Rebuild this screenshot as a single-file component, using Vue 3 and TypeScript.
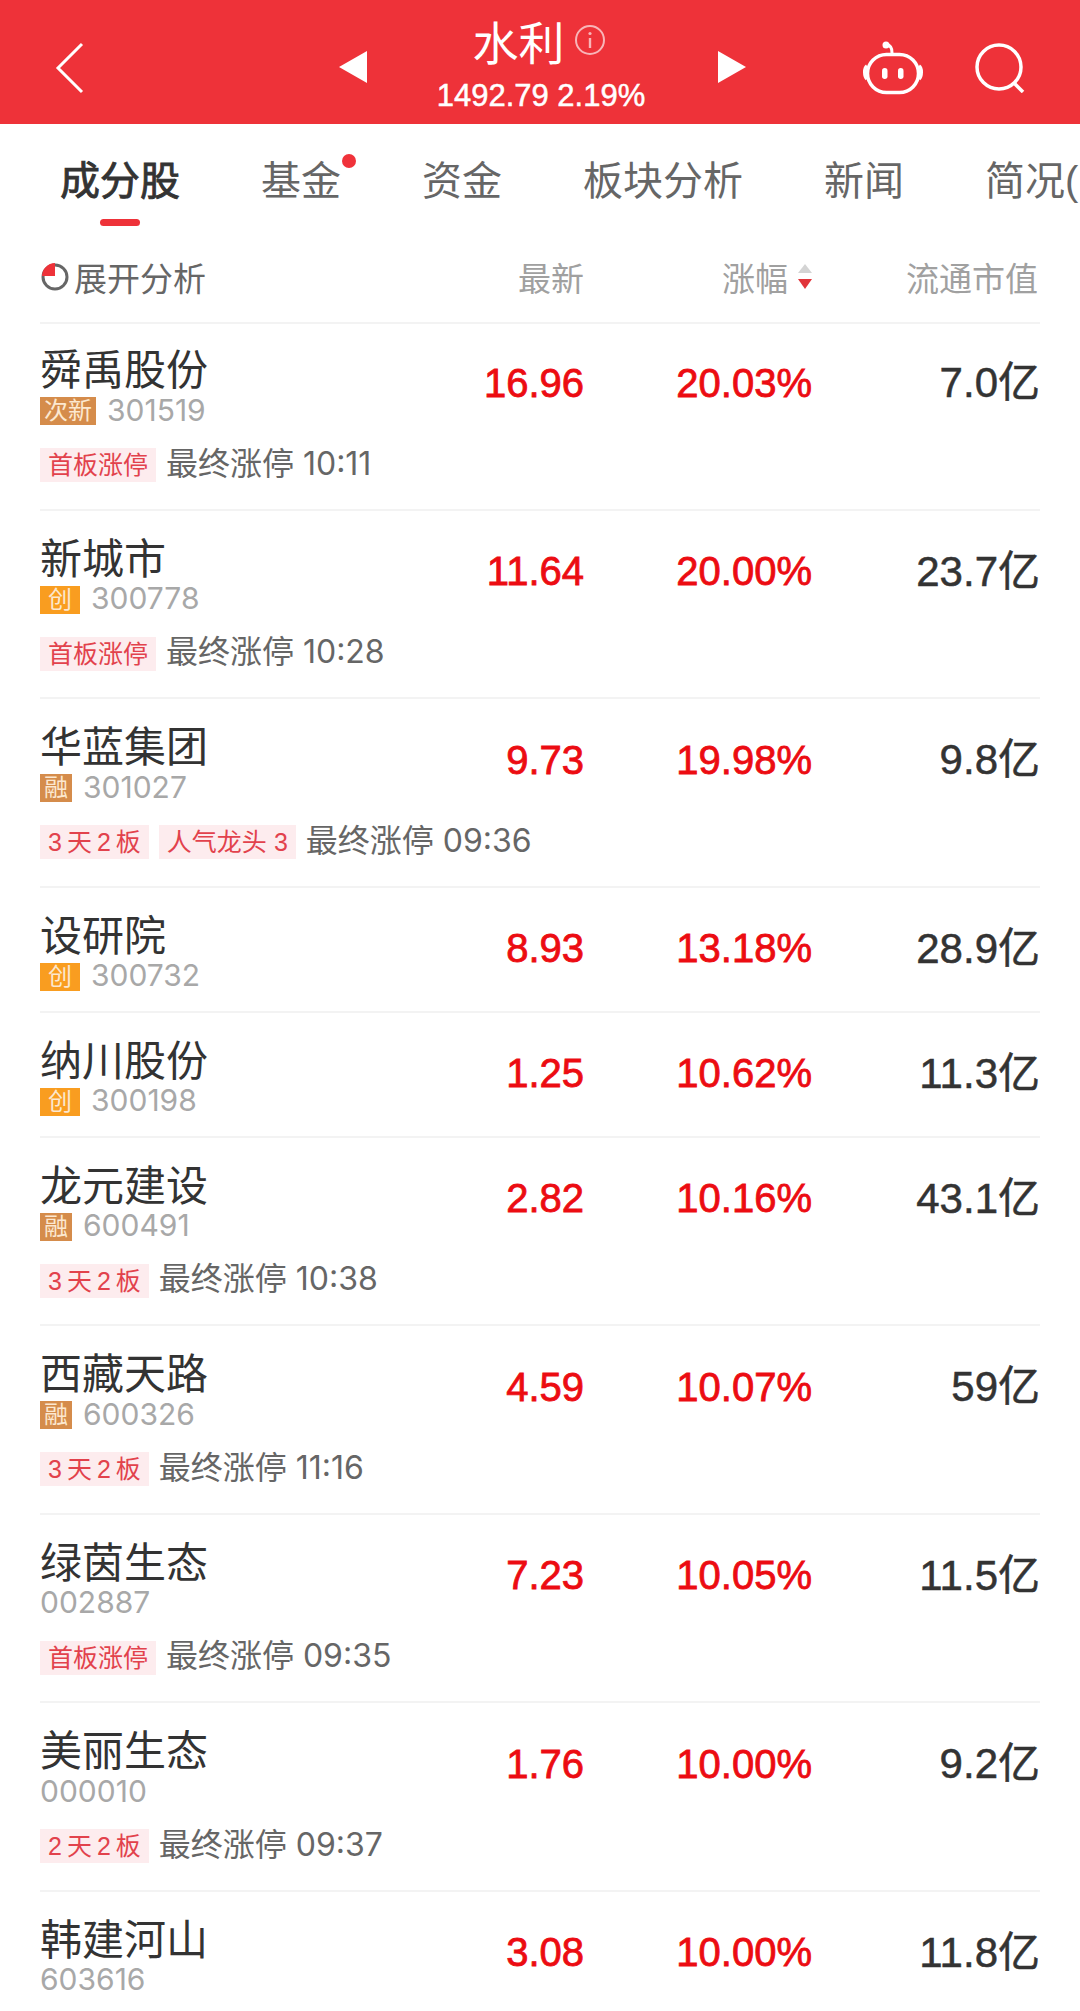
<template>
  <div class="page">
    <header class="topbar">
      <div class="left">
        <svg class="back" width="30" height="52" viewBox="0 0 30 52"><path d="M28 2 4 26l24 24" fill="none" stroke="#fff" stroke-width="3"/></svg>
      </div>
      <svg class="arrow" width="28" height="32" viewBox="0 0 28 32"><path d="M28 0v32L0 16z" fill="#fff"/></svg>
      <div class="center">
        <div class="title">
          <span>水利</span>
          <svg width="32" height="32" viewBox="0 0 32 32">
            <circle cx="16" cy="16" r="14" fill="none" stroke="#f8b5b8" stroke-width="2"/>
            <circle cx="16" cy="9.5" r="1.6" fill="#f8b5b8"/>
            <path d="M16 14v10" stroke="#f8b5b8" stroke-width="2.4"/>
          </svg>
        </div>
        <div class="sub">1492.79 2.19%</div>
      </div>
      <svg class="arrow" width="28" height="32" viewBox="0 0 28 32"><path d="M0 0v32l28-16z" fill="#fff"/></svg>
      <div class="right">
        <svg width="60" height="54" viewBox="0 0 60 54">
          <path d="M24 4c3 0 5 3 5 8" fill="none" stroke="#fff" stroke-width="3" stroke-linecap="round"/>
          <circle cx="23" cy="4" r="3.5" fill="#fff"/>
          <rect x="4.500" y="13.500" width="51" height="38" rx="19" fill="none" stroke="#fff" stroke-width="3.500"/>
          <path d="M4 25c-3 2-3 10 0 13M56 25c3 2 3 10 0 13" fill="none" stroke="#fff" stroke-width="3.500"/>
          <rect x="19" y="27" width="5.500" height="11" rx="2.700" fill="#fff"/>
          <rect x="35" y="27" width="5.500" height="11" rx="2.700" fill="#fff"/>
        </svg>
        <svg width="50" height="50" viewBox="0 0 50 50">
          <circle cx="24" cy="24" r="22" fill="none" stroke="#fff" stroke-width="3.500"/>
          <path d="M39 40l9 9" stroke="#fff" stroke-width="3.500"/>
        </svg>
      </div>
    </header>

    <nav class="tabs">
      <span v-for="(t, i) in tabs" :key="t" class="tab" :class="{ on: i === 0, dot: i === 1 }">{{ t }}</span>
    </nav>

    <div class="wrap">
      <div class="head">
        <div class="expand">
          <svg width="28" height="30" viewBox="0 0 28 30">
            <circle cx="14" cy="15" r="12" fill="none" stroke="#666" stroke-width="3"/>
            <path d="M1 14C1 7 7 1 14 1v13z" fill="#ee3239"/>
          </svg>
          <span>展开分析</span>
        </div>
        <span class="h-num">最新</span>
        <span class="h-num sort">
          涨幅
          <svg width="14" height="26" viewBox="0 0 14 26"><path d="M7 0l7 9H0z" fill="#d4d4d4"/><path d="M0 15h14l-7 10z" fill="#e1343a"/></svg>
        </span>
        <span class="h-num cap">流通市值</span>
      </div>

      <div class="list">
        <div v-for="s in stocks" :key="s.code" class="row">
          <div class="main">
            <div>
              <div class="name">{{ s.name }}</div>
              <div class="code-line">
                <span v-if="s.badge" class="badge" :class="s.kind">{{ s.badge }}</span>
                <span class="code">{{ s.code }}</span>
              </div>
            </div>
            <div class="num">{{ s.price }}</div>
            <div class="num">{{ s.pct }}</div>
            <div class="mcap">{{ s.cap }}</div>
          </div>
          <div v-if="s.tags" class="tags">
            <span v-for="t in s.tags" :key="t" class="tag">{{ t }}</span>
            <span class="time">最终涨停 <span class="clock">{{ s.time }}</span></span>
          </div>
        </div>
      </div>
    </div>
  </div>
</template>

<script setup lang="ts">
interface Stock {
  name: string
  code: string
  badge?: string
  kind?: string
  price: string
  pct: string
  cap: string
  tags?: string[]
  time?: string
}

const tabs = ['成分股', '基金', '资金', '板块分析', '新闻', '简况(']

const stocks: Stock[] = [
  { name: '舜禹股份', code: '301519', badge: '次新', kind: 'brown', price: '16.96', pct: '20.03%', cap: '7.0亿', tags: ['首板涨停'], time: '10:11' },
  { name: '新城市', code: '300778', badge: '创', kind: 'orange', price: '11.64', pct: '20.00%', cap: '23.7亿', tags: ['首板涨停'], time: '10:28' },
  { name: '华蓝集团', code: '301027', badge: '融', kind: 'brown', price: '9.73', pct: '19.98%', cap: '9.8亿', tags: ['3\u2009天\u20092\u2009板', '人气龙头\u2009\u200a3'], time: '09:36' },
  { name: '设研院', code: '300732', badge: '创', kind: 'orange', price: '8.93', pct: '13.18%', cap: '28.9亿' },
  { name: '纳川股份', code: '300198', badge: '创', kind: 'orange', price: '1.25', pct: '10.62%', cap: '11.3亿' },
  { name: '龙元建设', code: '600491', badge: '融', kind: 'brown', price: '2.82', pct: '10.16%', cap: '43.1亿', tags: ['3\u2009天\u20092\u2009板'], time: '10:38' },
  { name: '西藏天路', code: '600326', badge: '融', kind: 'brown', price: '4.59', pct: '10.07%', cap: '59亿', tags: ['3\u2009天\u20092\u2009板'], time: '11:16' },
  { name: '绿茵生态', code: '002887', price: '7.23', pct: '10.05%', cap: '11.5亿', tags: ['首板涨停'], time: '09:35' },
  { name: '美丽生态', code: '000010', price: '1.76', pct: '10.00%', cap: '9.2亿', tags: ['2\u2009天\u20092\u2009板'], time: '09:37' },
  { name: '韩建河山', code: '603616', price: '3.08', pct: '10.00%', cap: '11.8亿' },
]
</script>

<style scoped>
.page {
  width: 1080px;
  height: 2011px;
  overflow: hidden;
  background: #fff;
  font-family: "Liberation Sans", "Noto Sans CJK SC", sans-serif;
  color: #333;
}
.topbar {
  height: 124px;
  background: #ee3239;
  display: flex;
  align-items: center;
  color: #fff;
}
.left { width: 339px; padding-left: 54px; box-sizing: border-box; display: flex; }
.back { margin-top: 12px; }
.arrow { flex: none; margin-top: 9px; }
.center { width: 351px; display: flex; flex-direction: column; align-items: center; padding-top: 12px; box-sizing: border-box; height: 124px; }
.title { display: flex; align-items: center; gap: 9px; height: 56px; font-size: 46px; margin-left: -7px; }
.sub { font-size: 31px; line-height: 40px; margin-top: 8px; margin-left: -3px; -webkit-text-stroke: 0.5px #fff; }
.right { flex: 1; display: flex; align-items: center; justify-content: flex-end; gap: 52px; padding-right: 55px; margin-top: 12px; }

.tabs {
  height: 113px;
  box-sizing: border-box;
  padding: 33px 0 0 60px;
  display: flex;
  gap: 81px;
  white-space: nowrap;
  overflow: hidden;
  font-size: 40px;
  line-height: 48px;
  color: #666;
}
.tab { position: relative; flex: none; }
.tab.on { color: #333; -webkit-text-stroke: 0.9px #333; }
.tab.on::after {
  content: "";
  position: absolute;
  left: 40px;
  top: 62px;
  width: 40px;
  height: 7px;
  border-radius: 4px;
  background: #ee3239;
}
.tab.dot::after {
  content: "";
  position: absolute;
  right: -15px;
  top: -3px;
  width: 14px;
  height: 14px;
  border-radius: 50%;
  background: #f0323a;
}

.wrap { margin: 0 40px; }
.head {
  height: 87px;
  box-sizing: border-box;
  border-bottom: 2px solid #f3f3f3;
  padding-bottom: 5px;
  display: grid;
  grid-template-columns: 1fr 120px 228px 228px;
  align-items: center;
  font-size: 33px;
  color: #a0a0a0;
}
.expand { display: flex; align-items: center; gap: 5px; margin-left: 1px; color: #666; }
.h-num { text-align: right; }
.sort { display: flex; align-items: center; justify-content: flex-end; gap: 10px; }
.cap { padding-right: 2px; }

.list { margin-top: -2px; }
.row { border-bottom: 2px solid #f3f3f3; }
.row:last-child { border-bottom: none; }
.main {
  display: grid;
  grid-template-columns: 1fr 120px 228px 228px;
  align-items: center;
  padding: 25px 0 18px;
}
.name { font-size: 42px; line-height: 48px; color: #333; }
.code-line { display: flex; align-items: center; height: 32px; gap: 11px; }
.code { font-family: Inter, "Liberation Sans", sans-serif; font-size: 30px; color: #a8a8a8; margin-top: -3px; }
.badge {
  height: 28px;
  line-height: 28px;
  padding: 0 4px;
  font-size: 24px;
  color: #fce8d0;
}
.brown { background: #d58c4b; }
.orange { background: #f99d20; padding: 0 8px; }
.num {
  text-align: right;
  font-size: 40px;
  line-height: 48px;
  margin-top: -9px;
  color: #ec0c12;
  -webkit-text-stroke: 0.8px #ec0c12;
}
.mcap {
  text-align: right;
  font-size: 42px;
  line-height: 48px;
  margin-top: -8px;
  color: #333;
  -webkit-text-stroke: 0.5px #333;
}
.tags {
  display: flex;
  align-items: center;
  gap: 10px;
  height: 34px;
  margin: 3px 0 26.5px;
}
.tag {
  height: 34px;
  line-height: 34px;
  padding: 0 8px;
  font-size: 25px;
  color: #e2424c;
  background: #fdecee;
}
.time { font-size: 32px; line-height: 34px; color: #666; margin-top: -3px; }
.clock { font-family: Inter, "Liberation Sans", sans-serif; }
</style>
